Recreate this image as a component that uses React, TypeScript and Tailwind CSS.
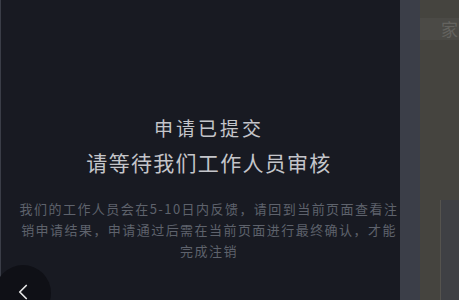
import { ChevronLeft } from "lucide-react";

export default function App() {
  return (
    <div
      className="flex h-[300px] w-[459px] overflow-hidden bg-[#45443f]"
      style={{ fontFamily: '"Noto Sans CJK SC", "Noto Sans", sans-serif' }}
    >
      <main className="relative flex w-[400px] shrink-0 flex-col items-center border-l border-[#3a3d47] bg-[#181a22] pl-[17px] pt-[116px]">
        <h1 className="text-[19px] leading-[24px] tracking-[3px] text-[#c4c5ca]">申请已提交</h1>
        <h2 className="mt-[10px] text-[21px] leading-[24px] tracking-[1.3px] text-[#c4c5ca]">
          请等待我们工作人员审核
        </h2>
        <p className="mt-[24px] whitespace-nowrap text-center text-[13px] leading-[21px] tracking-[1.45px] text-[#5e626c]">
          我们的工作人员会在5-10日内反馈，请回到当前页面查看注
          <br />
          销申请结果，申请通过后需在当前页面进行最终确认，才能
          <br />
          完成注销
        </p>
        <button className="absolute left-[-6px] top-[265px] flex h-[56px] w-[56px] items-start justify-center rounded-full bg-[#0f1016] pt-[14px] text-[#e6e6e6]">
          <ChevronLeft size={26} strokeWidth={1.6} />
        </button>
      </main>
      <section className="w-[20px] shrink-0 bg-[#3b3e48]" />
      <aside className="flex flex-1 flex-col bg-[#45443f]">
        <div className="mt-[18px] flex h-[22px] items-center justify-end bg-[#4b4a46] text-[17px] leading-[22px] text-[#64635f]">
          <span className="mr-[1px]">家</span>
        </div>
        <div className="ml-[20px] mt-[160px] flex-1 border-l border-[#55534e] bg-[#3f4044]" />
      </aside>
    </div>
  );
}
